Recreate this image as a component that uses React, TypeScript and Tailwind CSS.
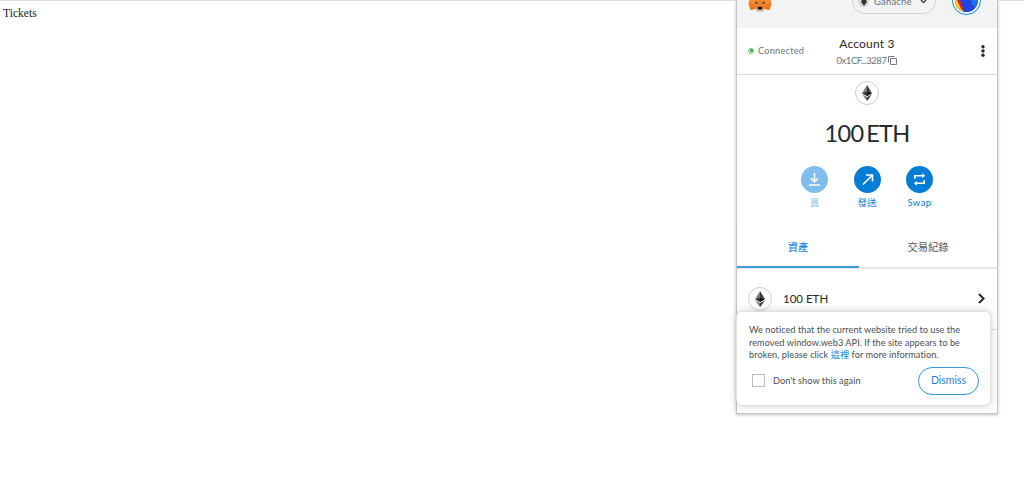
import type { ReactNode } from "react";

function EthIcon() {
  return (
    <div className="flex size-6 shrink-0 items-center justify-center rounded-full border border-[#c9cccf] bg-white">
      <svg width="10" height="16" viewBox="0 0 10 16">
        <path d="M5 0 0 8.2 5 6z" fill="#7a7a7a" />
        <path d="M5 0l5 8.2L5 6z" fill="#393939" />
        <path d="M0 8.2 5 6v5.2z" fill="#343434" />
        <path d="M10 8.2 5 6v5.2z" fill="#111" />
        <path d="M0 9.3 5 16v-3.7z" fill="#777" />
        <path d="M10 9.3 5 16v-3.7z" fill="#333" />
      </svg>
    </div>
  );
}

function FoxLogo() {
  return (
    <svg width="24" height="24" viewBox="0 0 24 24" className="shrink-0">
      <path d="M1 0 8 4h8l7-4-1 10 1.5 5.5L21.5 22l-5-1-2 2.5h-5l-2-2.5-5 1L.5 15.5 2 10z" fill="#f0842a" />
      <path d="M.5 15.5 7 16l.6 5-5 1zM23.5 15.5 17 16l-.6 5 5 1z" fill="#e97a22" />
      <path d="m2 10 6 3-1 3-6.5-.5zM22 10l-6 3 1 3 6.5-.5z" fill="#f58d35" />
      <path d="m7 13.5 2.8.9.2 1.4-3-.3zM17 13.5l-2.8.9-.2 1.4 3-.3z" fill="#5c453c" />
      <path d="m7.6 21 2.4-1.2h4l2.4 1.2-1.9 2.7h-5z" fill="#d6c0b3" />
      <path d="m9.8 19.3.6-.6h3.2l.6.6.2 2.2H9.6z" fill="#1d1817" />
    </svg>
  );
}

type ActionButtonProps = {
  label: string;
  disabled?: boolean;
  labelClass?: string;
  children: ReactNode;
};

function ActionButton({ label, disabled, labelClass = "", children }: ActionButtonProps) {
  return (
    <button
      disabled={disabled}
      className={`flex w-[52.5px] flex-col items-center ${disabled ? "opacity-50" : ""}`}
    >
      <span className="flex size-[27px] items-center justify-center rounded-full bg-[#037dd6]">
        <svg
          width="27"
          height="27"
          viewBox="0 0 27 27"
          fill="none"
          stroke="white"
          strokeWidth="1.6"
        >
          {children}
        </svg>
      </span>
      <span
        className={`mt-[3px] text-[9.5px] leading-[13px] whitespace-nowrap text-[#037dd6] ${labelClass}`}
      >
        {label}
      </span>
    </button>
  );
}

function Web3Notice() {
  return (
    <div className="absolute top-[311px] left-0 h-[95px] w-[255px] rounded-[6px] border border-[#dedfe0] bg-white pt-3 pl-3 shadow-[0_0_8px_rgba(0,0,0,0.18)]">
      <p className="text-[9.2px] leading-[12.5px] whitespace-nowrap text-[#4a4f55]">
        <span className="block tracking-[0.03px]">
          We noticed that the current website tried to use the
        </span>
        <span className="block tracking-[0.03px]">
          removed window.web3 API. If the site appears to be
        </span>
        <span className="block tracking-[0.06px]">
          broken, please click <a className="text-[#037dd6]">這裡</a> for more information.
        </span>
      </p>

      <div className="mt-[5px] flex h-7 items-center">
        <span className="ml-[3px] size-[13px] border-[1.5px] border-[#b8bcc1] bg-white" />
        <span className="ml-2 text-[9.2px] tracking-[0.05px] whitespace-nowrap text-[#4a4f55]">
          Don't show this again
        </span>
        <button className="mr-[11px] ml-auto h-7 w-[61px] rounded-full border border-[#3098dc] text-[10.5px] text-[#1684d8]">
          Dismiss
        </button>
      </div>
    </div>
  );
}

function WalletPopup() {
  return (
    <section className="absolute top-0 right-[26px] h-[414px] w-[262px] border-x border-b border-[#c4c4c4] bg-white font-['Lato','Noto_Sans_CJK_TC',sans-serif] shadow-[0_1px_3px_rgba(0,0,0,0.25)]">
      <header className="h-7 overflow-hidden bg-[#f2f3f4]">
        <div className="-mt-3 flex h-[27px] items-start pl-[11px]">
          <FoxLogo />
          <div className="ml-[80px] flex h-[26px] w-[84px] items-center rounded-full border border-[#d0d3d6] pl-[5px]">
            <span className="flex size-[11px] items-center justify-center rounded-full bg-[#d5d7da]">
              <svg width="6" height="9" viewBox="0 0 6 9">
                <path d="m3 0 3 4.7L3 9 0 4.7z" fill="#333" />
              </svg>
            </span>
            <span className="mt-[2px] ml-[5px] text-[9.5px] leading-[12px] tracking-[0.15px] text-[#6a737d]">
              Ganache
            </span>
            <svg width="7" height="5" viewBox="0 0 7 5" className="mr-[8px] ml-auto">
              <path d="m.8.8 2.7 2.8L6.2.8" fill="none" stroke="#333" strokeWidth="1.3" />
            </svg>
          </div>
          <div className="mt-[-2px] ml-4 size-[29px] shrink-0 rounded-full border-[1.5px] border-[#037dd6] bg-white p-[1.5px]">
            <svg width="23" height="23" viewBox="0 0 24 24" className="overflow-hidden rounded-full">
              <path d="M0 0h24v24H0z" fill="#1d45e0" />
              <path d="M15 0h9v19l-6-2z" fill="#1a72f5" />
              <path d="M0 4l5 8 4 12H0z" fill="#f5cf09" />
              <path d="M1 9l4 2 4 10-2 1z" fill="#e5152b" />
            </svg>
          </div>
        </div>
      </header>

      <div className="relative flex h-[47px] items-center border-b border-[#d6d9dc]">
        <div className="flex items-center pl-[11px] text-[9.2px] text-[#6a737d]">
          <span className="mr-1 flex size-[6px] items-center justify-center rounded-full border border-[#5ec26a]">
            <span className="size-[3px] rounded-full bg-[#28a745]" />
          </span>
          <span className="tracking-[0.23px]">Connected</span>
        </div>
        <div className="absolute inset-x-0 top-2 flex flex-col items-center">
          <p className="text-[12px] leading-[15px] tracking-[0.2px] text-[#24292e]">
            Account 3
          </p>
          <p className="mt-[3px] flex items-center text-[9.5px] leading-[13px] tracking-[-0.45px] text-[#6a737d]">
            0x1CF...3287
            <svg
              width="9"
              height="9"
              viewBox="0 0 9 9"
              fill="none"
              stroke="#777e86"
              className="ml-[2px]"
            >
              <path d="M2.5 2.5h6v6h-6zM.5 6.5v-6h6" />
            </svg>
          </p>
        </div>
        <svg width="4" height="12" viewBox="0 0 4 12" className="mr-3 ml-auto" fill="#24292e">
          <circle cx="2" cy="1.8" r="1.7" />
          <circle cx="2" cy="6" r="1.7" />
          <circle cx="2" cy="10.2" r="1.7" />
        </svg>
      </div>

      <div className="flex h-[154px] flex-col items-center pt-[6px]">
        <EthIcon />
        <p className="mt-[13px] text-[23.5px] leading-[30px] tracking-[-0.7px] [word-spacing:-2.5px] whitespace-nowrap text-[#24292e]">
          100 ETH
        </p>
        <div className="mt-[18px] flex">
          <ActionButton label="買" disabled>
            <path d="M13.5 7v8.5M10 12.3l3.5 3.5 3.5-3.5M8 19h11" />
          </ActionButton>
          <ActionButton label="發送">
            <path d="m9 18.5 9-9M12 9h6.5v6.5" />
          </ActionButton>
          <ActionButton label="Swap" labelClass="tracking-[0.4px]">
            <path d="M8.8 12.8V9.7h8.5M18.2 14.2v3.1H9.7" />
            <path d="m16.2 7.3 3 2.4-3 2.4zM10.8 14.9l-3 2.4 3 2.4z" fill="white" stroke="none" />
          </ActionButton>
        </div>
      </div>

      <div className="flex h-[39px] border-b border-[#dfe1e3] text-[10.3px] shadow-[0_1px_1px_rgba(0,0,0,0.08)]">
        <button className="-mb-px w-[122px] border-b-2 border-[#3f9ad8] text-[#037dd6]">
          資產
        </button>
        <button className="flex-1 pb-px text-[#535a61]">交易紀錄</button>
      </div>

      <div className="flex h-[62px] items-center border-b border-[#d6d9dc] pr-3 pl-[11px]">
        <EthIcon />
        <span className="ml-[11px] text-[11.5px] text-[#24292e]">100 ETH</span>
        <svg width="7" height="11" viewBox="0 0 7 11" className="ml-auto">
          <path d="m1 1 4.5 4.5L1 10" fill="none" stroke="#24292e" strokeWidth="2" />
        </svg>
      </div>

      <div className="absolute top-0 -left-px">
        <Web3Notice />
      </div>
    </section>
  );
}

export default function App() {
  return (
    <main className="relative h-[482px] w-full overflow-hidden bg-white">
      <p className="border-t border-[#dcdcdc] pt-[5px] pl-[3px] font-['Liberation_Serif',serif] text-[11.6px] leading-[15px] text-[#222]">
        Tickets
      </p>
      <WalletPopup />
    </main>
  );
}
